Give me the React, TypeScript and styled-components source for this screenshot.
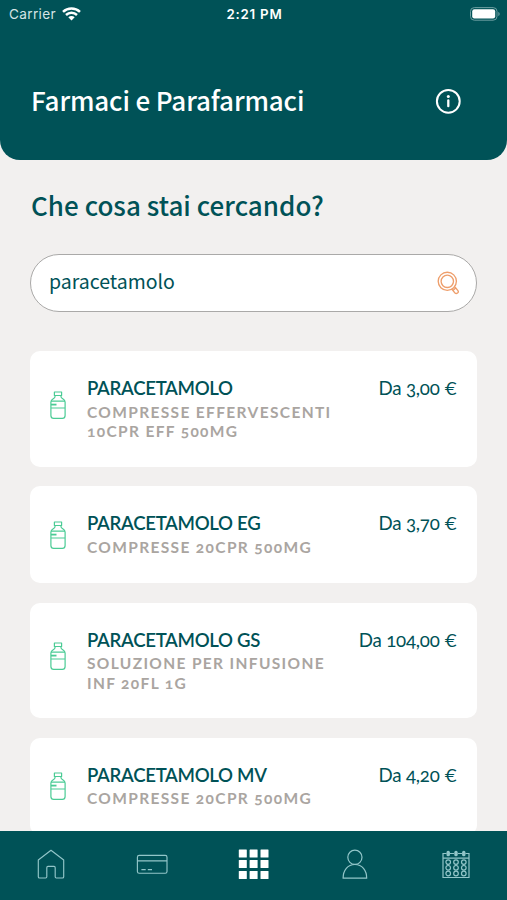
import React from "react";
import styled, { createGlobalStyle } from "styled-components";

const TEAL = "#005257";

const GlobalStyle = createGlobalStyle`
  * { box-sizing: border-box; }
  body { margin: 0; background: #f2f0ef; }
`;

const Screen = styled.div`
  width: 507px;
  height: 900px;
  display: flex;
  flex-direction: column;
  overflow: hidden;
  background: #f2f0ef;
  color: ${TEAL};
  font-family: "Noto Sans CJK SC", "Noto Sans", sans-serif;
`;

const Header = styled.header`
  flex: none;
  height: 159.5px;
  background: ${TEAL};
  border-radius: 0 0 20px 20px;
  color: #fff;
`;

const StatusBar = styled.div`
  height: 27px;
  padding: 0 7px 0 9px;
  display: grid;
  grid-template-columns: 1fr auto 1fr;
  align-items: center;
  font-family: Inter, sans-serif;
  font-size: 13.6px;
  line-height: 28px;
`;

const Carrier = styled.div`
  display: flex;
  align-items: center;
  gap: 6px;
  color: #d5e4e5;
  letter-spacing: 0.35px;
`;

const Clock = styled.div`
  font-weight: 600;
  font-size: 13.3px;
  letter-spacing: 0.75px;
`;

const BatterySlot = styled.div`
  display: flex;
  justify-content: flex-end;
`;

const TitleRow = styled.div`
  height: 60px;
  margin-top: 44px;
  padding: 0 46px 0 31px;
  display: flex;
  align-items: center;
  justify-content: space-between;
`;

const Title = styled.h1`
  margin: 0 0 2px;
  font-size: 26px;
  line-height: 40px;
  font-weight: 500;
  letter-spacing: -0.13px;
  white-space: nowrap;
`;

const Main = styled.main`
  flex: 1;
  min-height: 0;
  overflow: hidden;
  padding: 25.5px 30px 0;
`;

const Question = styled.h2`
  margin: 0 0 29px 1px;
  font-size: 26px;
  line-height: 40px;
  font-weight: 500;
  letter-spacing: 0.03px;
  white-space: nowrap;
`;

const SearchBox = styled.div`
  height: 58px;
  padding: 0 16px 0 18px;
  display: flex;
  align-items: center;
  justify-content: space-between;
  border: 1px solid #aaa9a8;
  border-radius: 29px;
  background: #fff;
  font-size: 19.5px;
  line-height: 30px;
`;

const Query = styled.span`
  padding-bottom: 4px;
`;

const List = styled.div`
  margin-top: 39px;
  display: flex;
  flex-direction: column;
  gap: 19.5px;
`;

const Card = styled.article<{ $tall: boolean }>`
  flex: none;
  height: ${(p) => (p.$tall ? 115.5 : 97.3)}px;
  padding: 24px 20px 0;
  display: grid;
  grid-template-columns: 37px 1fr auto;
  border-radius: 10px;
  background: #fff;
  font-family: Lato, sans-serif;
  font-feature-settings: "onum" 1;
`;

const BottleSlot = styled.div<{ $tall: boolean }>`
  padding-top: ${(p) => (p.$tall ? 15.5 : 10.5)}px;
  svg { display: block; }
`;

const Name = styled.div`
  margin-bottom: 1.5px;
  font-size: 18.6px;
  line-height: 26px;
  font-weight: 600;
  letter-spacing: -0.3px;
  white-space: nowrap;
`;

const Detail = styled.div`
  font-size: 15.5px;
  line-height: 19.7px;
  font-weight: 700;
  letter-spacing: 1.35px;
  color: #aaa5a1;
  white-space: nowrap;
`;

const Price = styled.div`
  font-size: 18.7px;
  line-height: 26px;
  letter-spacing: -0.2px;
  white-space: nowrap;
`;

const Currency = styled.span`
  font-size: 17.5px;
  font-feature-settings: "lnum" 1;
`;

const TabBar = styled.nav`
  flex: none;
  height: 68.7px;
  padding-top: 0.7px;
  background: ${TEAL};
  display: grid;
  grid-template-columns: repeat(5, 1fr);
  color: #92c6c9;
`;

const Tab = styled.div`
  display: flex;
  justify-content: center;
  padding-top: 16px;
  svg { display: block; }
`;

const Wifi = () => (
  <svg width="19" height="14" viewBox="0 0 19 14" fill="none" stroke="#fff" strokeWidth="2.5">
    <path d="M1 4.8C5.8.3 13.2.3 18 4.8M4 8c3.1-2.9 7.9-2.9 11 0" />
    <path d="M6.3 10.3c1.8-1.7 4.6-1.7 6.4 0L9.5 13.5z" fill="#fff" stroke="none" />
  </svg>
);

const Battery = () => (
  <svg width="31" height="14" viewBox="0 0 31 14" fill="none">
    <rect x="1.5" y=".6" width="26.5" height="12.6" rx="3.8" stroke="#6c9ea1" />
    <rect x="3.2" y="2.3" width="23" height="9.2" rx="2.2" fill="#fff" />
    <path d="M29.3 5v4c1.8-.6 1.8-3.4 0-4z" fill="#6c9ea1" />
  </svg>
);

const Info = () => (
  <svg width="26" height="26" viewBox="0 0 26 26" fill="none" stroke="#fff" strokeWidth="2">
    <circle cx="13.3" cy="13.3" r="11.4" />
    <path d="M13.3 12.5v5.7" strokeWidth="2.3" strokeLinecap="round" />
    <circle cx="13.3" cy="8.5" r="1.5" fill="#fff" stroke="none" />
  </svg>
);

const Magnifier = () => (
  <svg width="23" height="24" viewBox="0 0 23 24" fill="none" stroke="#ee9e6b" strokeWidth="1.35">
    <circle cx="10.3" cy="10.3" r="9.1" />
    <circle cx="10.3" cy="10.3" r="6.2" />
    <path d="M14.8 18.3l1.2 1.3 2 2.4c1.6 1.5 4.2-.7 2.9-2.4l-2.1-2.6-1.2-1.1M16 19.4l2.6-2.4" />
  </svg>
);

const Bottle = () => (
  <svg width="16" height="29" viewBox="0 0 16 29" fill="none" stroke="#4bcb95" strokeWidth="1.2" strokeLinejoin="round">
    <path d="M4.4 1h7.2v3.5H4.4zM5 4.5v1.3c0 2-4.1 2.3-4.1 5.2v13.5c0 1.8 1.1 2.9 2.8 2.9h8.6c1.7 0 2.8-1.1 2.8-2.9V11c0-2.9-4.1-3.2-4.1-5.2V4.5" />
    <path d="M1 10.2h14M1 17h14" />
    <path d="M1 13.6h5.5" strokeWidth="1.8" />
  </svg>
);

const Home = () => (
  <svg width="28" height="32" viewBox="0 0 28 32" fill="none" stroke="currentColor" strokeWidth="1.15" strokeLinejoin="round">
    <path d="M1.3 12L14 2.3 26.7 12v16.7q0 1.3-1.3 1.3h-6.1q-1.1 0-1.1-1.2v-9.1q0-1.3-1.2-1.3h-6q-1.2 0-1.2 1.3v9.1q0 1.2-1.2 1.2H2.6q-1.3 0-1.3-1.3z" />
  </svg>
);

const PaymentCard = () => (
  <svg width="32" height="32" viewBox="0 0 32 32" fill="none" stroke="currentColor" strokeWidth="1.15">
    <rect x="1.4" y="7.4" width="29.6" height="17.8" rx="1.8" />
    <path d="M1.4 12.8H31M5.4 21.6h4.3M11.8 21.6H16" />
  </svg>
);

const Grid = () => (
  <svg width="32" height="34" viewBox="0 0 32 34" fill="#fff">
    {[1.6, 12, 23].map((y) =>
      [1.8, 12.6, 23.5].map((x) => <rect key={`${x}-${y}`} x={x} y={y} width="8" height="8" rx=".5" />)
    )}
  </svg>
);

const Person = () => (
  <svg width="26" height="32" viewBox="0 0 26 32" fill="none" stroke="currentColor" strokeWidth="1.2" strokeLinejoin="round">
    <circle cx="12.9" cy="9.3" r="7.1" />
    <path d="M1.1 30.2c0-8 4.6-13.7 11.8-13.7s11.8 5.7 11.8 13.7z" />
  </svg>
);

const Calendar = () => (
  <svg width="28" height="32" viewBox="0 0 28 32" fill="none" stroke="currentColor" strokeWidth="1.2">
    <path d="M4.6 5.5H1v24h26v-24h-3.6M8 5.5h4M16 5.5h4M1 10.2h26" />
    {[6.2, 14, 21.8].map((x) => (
      <g key={x}>
        <rect x={x - 1.1} y="3.4" width="2.2" height="4.3" rx="1" fill="currentColor" />
        {[14.1, 19.8, 25.5].map((y) => <circle key={y} cx={x} cy={y} r="2.3" />)}
      </g>
    ))}
  </svg>
);

const products = [
  { name: "PARACETAMOLO", lines: ["COMPRESSE EFFERVESCENTI", "10CPR EFF 500MG"], price: "3,00" },
  { name: "PARACETAMOLO EG", lines: ["COMPRESSE 20CPR 500MG"], price: "3,70" },
  { name: "PARACETAMOLO GS", lines: ["SOLUZIONE PER INFUSIONE", "INF 20FL 1G"], price: "104,00" },
  { name: "PARACETAMOLO MV", lines: ["COMPRESSE 20CPR 500MG"], price: "4,20" },
];

export default function App() {
  return (
    <>
      <GlobalStyle />
      <Screen>
        <Header>
          <StatusBar>
            <Carrier>Carrier <Wifi /></Carrier>
            <Clock>2:21 PM</Clock>
            <BatterySlot><Battery /></BatterySlot>
          </StatusBar>
          <TitleRow>
            <Title>Farmaci e Parafarmaci</Title>
            <Info />
          </TitleRow>
        </Header>
        <Main>
          <Question>Che cosa stai cercando?</Question>
          <SearchBox>
            <Query>paracetamolo</Query>
            <Magnifier />
          </SearchBox>
          <List>
            {products.map((p) => {
              const tall = p.lines.length > 1;
              return (
                <Card key={p.name} $tall={tall}>
                  <BottleSlot $tall={tall}><Bottle /></BottleSlot>
                  <div>
                    <Name>{p.name}</Name>
                    {p.lines.map((l) => <Detail key={l}>{l}</Detail>)}
                  </div>
                  <Price>Da {p.price} <Currency>€</Currency></Price>
                </Card>
              );
            })}
          </List>
        </Main>
        <TabBar>
          <Tab><Home /></Tab>
          <Tab><PaymentCard /></Tab>
          <Tab><Grid /></Tab>
          <Tab><Person /></Tab>
          <Tab><Calendar /></Tab>
        </TabBar>
      </Screen>
    </>
  );
}
